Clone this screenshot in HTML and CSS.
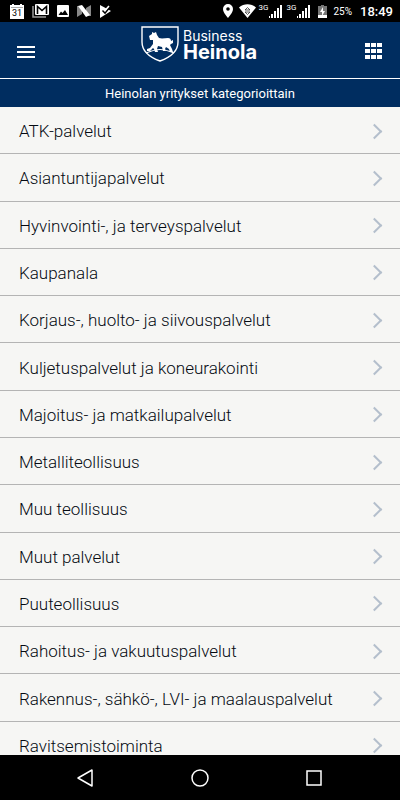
FILE: index.html
```html
<!DOCTYPE html>
<html lang="fi">
<head>
    <meta charset="UTF-8">
    <meta name="viewport" content="width=device-width, initial-scale=1.0">
    <title>Business Heinola</title>
    <link rel="stylesheet" href="styles.css">
</head>
<body>
    <div class="status-bar">
        <div class="notifications">
            <svg width="14" height="15" viewBox="0 0 14 15">
                <path fill="#fff" d="M0 1h2V0h2v1h6V0h2v1h2v14H0z"/>
                <path stroke="#aaa" d="M1 3.500h12"/>
                <text class="calendar-day" x="7" y="12" text-anchor="middle">31</text>
            </svg>
            <svg width="17" height="14" viewBox="0 0 17 14">
                <path fill="none" stroke="#999" stroke-width="1.500" d="M1 2v11h13"/>
                <rect x="3" width="14" height="11" rx="1" fill="#fff"/>
                <path fill="none" stroke="#000" stroke-width="1.600" d="M5.500 10V2.500l4.500 4 4.500-4V10"/>
            </svg>
            <svg width="12" height="12" viewBox="0 0 12 12">
                <rect width="12" height="12" rx="1" fill="#fff"/>
                <path fill="#000" d="M1.500 10l2.500-3.500L5.500 8 8 5l3 5z"/>
            </svg>
            <svg width="14" height="12" viewBox="0 0 14 12">
                <path fill="#888" d="M0 1h5v8l-5 3zM14 0v11H9V3z"/>
                <path fill="#fff" d="M1 1l4-1 8 10-4 2z"/>
            </svg>
            <svg width="13" height="13" viewBox="0 0 13 13">
                <path fill="#fff" d="M1 0l11 6-11 7z"/>
                <path fill="none" stroke="#000" stroke-width="1.600" d="M3.500 5.500L6 8l5-6"/>
                <path fill="none" stroke="#fff" stroke-width="1.600" d="M4 3.500L6 5.500l4-4.500"/>
            </svg>
        </div>
        <div class="system">
            <svg class="pin" width="10" height="14" viewBox="0 0 10 14">
                <path fill="#fff" fill-rule="evenodd" d="M5 0a5 5 0 0 1 5 5c0 3.500-5 9-5 9S0 8.500 0 5a5 5 0 0 1 5-5zm0 3.200a1.800 1.800 0 1 0 0 3.600 1.800 1.800 0 0 0 0-3.600z"/>
            </svg>
            <svg class="wifi" width="17" height="14" viewBox="0 0 17 14">
                <path fill="#fff" d="M0 3.500C5-.8 12-.8 17 3.500L8.500 14z"/>
                <path fill="none" stroke="#333" stroke-width=".8" d="M6 6l2.500-2.500L11 6zM6 8h5l-2.500 2.500z"/>
            </svg>
            <span class="network">3G</span>
            <svg class="signal" width="13" height="13" viewBox="0 0 13 13">
                <path fill="#fff" d="M0 11h1v2H0zM2 9h2v4H2zM5 6h2v7H5zM8 3h2v10H8zM11 0h2v13h-2z"/>
            </svg>
            <span class="network">3G</span>
            <svg class="signal" width="13" height="13" viewBox="0 0 13 13">
                <path fill="#fff" d="M0 11h1v2H0zM2 9h2v4H2zM5 6h2v7H5zM8 3h2v10H8zM11 0h2v13h-2z"/>
            </svg>
            <svg class="battery" width="9" height="13" viewBox="0 0 9 13">
                <path fill="#777" d="M0 1h3V0h3v1h3v9H0z"/>
                <path fill="#fff" d="M0 10h9v3H0z"/>
                <path fill="#fff" d="M5 2L2 7h2v4l3-5H5z"/>
            </svg>
            <span class="percent">25%</span>
            <span class="clock">18:49</span>
        </div>
    </div>

    <header class="header">
        <button class="icon-button" type="button" aria-label="Valikko">
            <svg width="18" height="14" viewBox="0 0 18 14">
                <path fill="#fff" d="M0 1h18v2H0zM0 6h18v2H0zM0 11h18v2H0z"/>
            </svg>
        </button>
        <a class="logo" href="#">
            <svg width="38" height="36" viewBox="0 0 38 36">
                <path fill="none" stroke="#fff" stroke-width="1.400" d="M1 1h36v15c0 9-7 15-18 19C8 31 1 25 1 16z"/>
                <path fill="none" stroke="#fff" stroke-width="1.200" d="M5 27c5-2 9-3.500 14-3.500S28 25 33 27"/>
                <path fill="#fff" d="M8 10l3-2V6l2 1 2-1 1 3 2 3c3 1 6 0 9 0 2 0 3 1 3 3l2-1v3l-2 1-1 1 2 4 1 3h-3l-1-3-3-2-1 2 1 2h-3l-1-4-4-1-1 3 1 3h-3l-1-3-1-1-3 3H6v-2l3-1 3-4v-4l-3 0z"/>
            </svg>
            <span class="logo-text">
                <span class="logo-top">Business</span>
                <span class="logo-bottom">Heinola</span>
            </span>
        </a>
        <button class="icon-button" type="button" aria-label="Sovellukset">
            <svg width="18" height="18" viewBox="0 0 18 18">
                <path fill="#fff" d="M0 0h5v4H0zM6 0h5v4H6zM12 0h5v4h-5zM0 6h5v4H0zM6 6h5v4H6zM12 6h5v4h-5zM0 12h5v4H0zM6 12h5v4H6zM12 12h5v4h-5z"/>
            </svg>
        </button>
    </header>

    <h1 class="title">Heinolan yritykset kategorioittain</h1>

    <main class="content">
        <ul class="categories">
            <li><a href="#">ATK-palvelut</a></li>
            <li><a href="#">Asiantuntijapalvelut</a></li>
            <li><a href="#">Hyvinvointi-, ja terveyspalvelut</a></li>
            <li><a href="#">Kaupanala</a></li>
            <li><a href="#">Korjaus-, huolto- ja siivouspalvelut</a></li>
            <li><a href="#">Kuljetuspalvelut ja koneurakointi</a></li>
            <li><a href="#">Majoitus- ja matkailupalvelut</a></li>
            <li><a href="#">Metalliteollisuus</a></li>
            <li><a href="#">Muu teollisuus</a></li>
            <li><a href="#">Muut palvelut</a></li>
            <li><a href="#">Puuteollisuus</a></li>
            <li><a href="#">Rahoitus- ja vakuutuspalvelut</a></li>
            <li><a href="#">Rakennus-, sähkö-, LVI- ja maalauspalvelut</a></li>
            <li><a href="#">Ravitsemistoiminta</a></li>
        </ul>
    </main>

    <nav class="nav-bar">
        <button class="icon-button" type="button" aria-label="Takaisin">
            <svg width="18" height="18" viewBox="0 0 18 18">
                <path fill="none" stroke="#fff" stroke-width="1.500" stroke-linejoin="round" d="M15 1v16L1 9z"/>
            </svg>
        </button>
        <button class="icon-button" type="button" aria-label="Koti">
            <svg width="18" height="18" viewBox="0 0 18 18">
                <circle cx="9" cy="9" r="8" fill="none" stroke="#fff" stroke-width="1.500"/>
            </svg>
        </button>
        <button class="icon-button" type="button" aria-label="Viimeisimmät">
            <svg width="18" height="18" viewBox="0 0 18 18">
                <rect x="2" y="2" width="14" height="14" fill="none" stroke="#fff" stroke-width="1.500"/>
            </svg>
        </button>
    </nav>
</body>
</html>
```
FILE: styles.css
```css
* {
    box-sizing: border-box;
}

body {
    margin: 0;
    height: 100vh;
    display: flex;
    flex-direction: column;
    background-color: #f6f6f4;
    font-family: Roboto, sans-serif;
    color: #050a12;
}

svg {
    display: block;
    flex-shrink: 0;
}

/* Android status bar */
.status-bar {
    height: 22px;
    flex-shrink: 0;
    display: flex;
    justify-content: space-between;
    align-items: center;
    padding: 0 7px 0 10px;
    background-color: #000;
    color: #fff;
}

.notifications {
    display: flex;
    align-items: center;
    gap: 8px;
}

.calendar-day {
    font-size: 9px;
}

.system {
    display: flex;
    align-items: center;
}

.wifi {
    margin: 0 3px 0 6px;
}

.network {
    align-self: flex-start;
    font-size: 8px;
    line-height: 8px;
    margin-right: 1px;
}

.signal {
    margin-right: 4px;
}

.battery {
    margin: 0 6px 0 4px;
}

.percent {
    font-size: 10px;
    margin-right: 8px;
}

.clock {
    font-size: 13px;
    font-weight: 500;
}

.header {
    height: 57px;
    flex-shrink: 0;
    display: flex;
    justify-content: space-between;
    align-items: center;
    padding: 4px 9px 0;
    background-color: #002d60;
    border-bottom: 1px solid #fff;
}

.icon-button {
    display: flex;
    align-items: center;
    justify-content: center;
    width: 34px;
    height: 34px;
    padding: 0;
    border: 0;
    background: none;
    cursor: pointer;
}

.logo {
    display: flex;
    align-self: flex-start;
    gap: 4px;
    padding-right: 2px;
    color: #fff;
    text-decoration: none;
    font-family: Inter, sans-serif;
}

.logo-text {
    display: flex;
    flex-direction: column;
    padding-top: 1px;
}

.logo-top {
    font-size: 14px;
    line-height: 17px;
}

.logo-bottom {
    font-size: 20px;
    line-height: 16px;
    font-weight: bold;
}

.title {
    flex-shrink: 0;
    margin: 0;
    padding: 7px 0 5px;
    background-color: #002d60;
    color: #fff;
    font-size: 13px;
    line-height: 16px;
    font-weight: normal;
    text-align: center;
}

/* The last row runs on under the navigation bar */
.content {
    flex: 1;
    min-height: 0;
    overflow: hidden;
}

.categories {
    height: calc(100% + 14px);
    margin: 0;
    padding: 0;
    list-style: none;
    display: grid;
    grid-auto-rows: 1fr;
}

.categories li {
    display: flex;
    border-bottom: 1px solid #b4b4b4;
}

.categories a {
    flex: 1;
    display: flex;
    align-items: center;
    justify-content: space-between;
    padding: 2px 20px 0 19px;
    color: inherit;
    font-size: 17px;
    font-weight: 300;
    text-decoration: none;
}

.categories a::after {
    content: "";
    width: 9px;
    height: 9px;
    border: solid #b4bfcc;
    border-width: 2px 2px 0 0;
    transform: rotate(45deg);
}

.nav-bar {
    height: 45px;
    flex-shrink: 0;
    display: flex;
    justify-content: center;
    align-items: center;
    gap: 80px;
    background-color: #000;
}
```
